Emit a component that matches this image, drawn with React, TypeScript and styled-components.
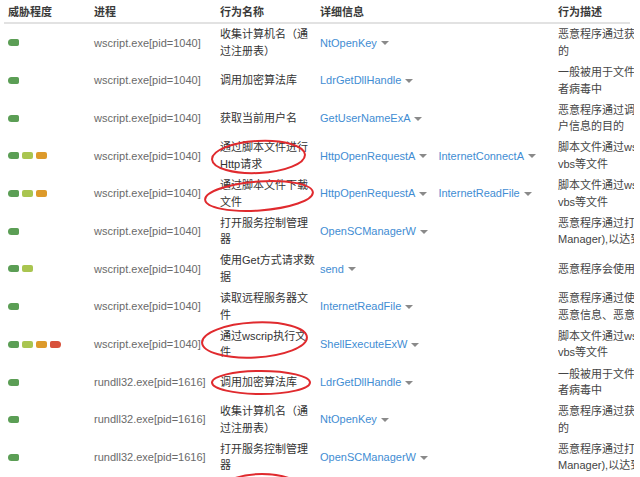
import React from 'react';
import styled, { createGlobalStyle } from 'styled-components';

type Level = 'green' | 'lime' | 'orange' | 'red';

interface BehaviorRow {
  levels: Level[];
  process: string;
  name: string;
  apis: string[];
  desc: string;
}

const LEVEL_COLORS: Record<Level, string> = {
  green: '#5b9e55',
  lime: '#a9c550',
  orange: '#dd9a2a',
  red: '#d8513c',
};

const WS = 'wscript.exe[pid=1040]';
const RD = 'rundll32.exe[pid=1616]';

const DESC_NAME = '恶意程序通过获取计算机名称达到收集主机信息的目\n的';
const DESC_CRYPT = '一般被用于文件加密或者加密通信，常见于勒索软件或\n者病毒中';
const DESC_SCM = '恶意程序通过打开服务控制管理器(Service Control\nManager),以达到创建或修改服务的目的';
const DESC_SCRIPT = '脚本文件通过wscript执行网络操作，常见于js、\nvbs等文件';

const rows: BehaviorRow[] = [
  { levels: ['green'], process: WS, name: '收集计算机名（通过注册表）', apis: ['NtOpenKey'], desc: DESC_NAME },
  { levels: ['green'], process: WS, name: '调用加密算法库', apis: ['LdrGetDllHandle'], desc: DESC_CRYPT },
  { levels: ['green'], process: WS, name: '获取当前用户名', apis: ['GetUserNameExA'], desc: '恶意程序通过调用该函数获取当前用户名，达到获取用\n户信息的目的' },
  { levels: ['green', 'lime', 'orange'], process: WS, name: '通过脚本文件进行Http请求', apis: ['HttpOpenRequestA', 'InternetConnectA'], desc: DESC_SCRIPT },
  { levels: ['green', 'lime', 'orange'], process: WS, name: '通过脚本文件下载文件', apis: ['HttpOpenRequestA', 'InternetReadFile'], desc: DESC_SCRIPT },
  { levels: ['green'], process: WS, name: '打开服务控制管理器', apis: ['OpenSCManagerW'], desc: DESC_SCM },
  { levels: ['green', 'lime'], process: WS, name: '使用Get方式请求数据', apis: ['send'], desc: '恶意程序会使用send函数向远程服务器发送数据' },
  { levels: ['green'], process: WS, name: '读取远程服务器文件', apis: ['InternetReadFile'], desc: '恶意程序通过使用该函数读取远程服务器上的文件，获取\n恶意信息、恶意代码等' },
  { levels: ['green', 'lime', 'orange', 'red'], process: WS, name: '通过wscrip执行文件', apis: ['ShellExecuteExW'], desc: DESC_SCRIPT },
  { levels: ['green'], process: RD, name: '调用加密算法库', apis: ['LdrGetDllHandle'], desc: DESC_CRYPT },
  { levels: ['green'], process: RD, name: '收集计算机名（通过注册表）', apis: ['NtOpenKey'], desc: DESC_NAME },
  { levels: ['green'], process: RD, name: '打开服务控制管理器', apis: ['OpenSCManagerW'], desc: DESC_SCM },
];

// hand-drawn red marks over the name column
const marks = [
  { cx: 258.5, cy: 157, rx: 46.5, ry: 16, rot: -3 },
  { cx: 259, cy: 196, rx: 54, ry: 14.5, rot: -4 },
  { cx: 254.5, cy: 340, rx: 52.5, ry: 17.5, rot: -3 },
  { cx: 261, cy: 382.5, rx: 49, ry: 11.5, rot: 0 },
  { cx: 262, cy: 498, rx: 48, ry: 24, rot: 0 },
];

export default function App() {
  return (
    <>
      <GlobalStyle />
      <Page>
        <Table>
          <HeaderRow>
            <HeadCell>威胁程度</HeadCell>
            <HeadCell>进程</HeadCell>
            <HeadCell>行为名称</HeadCell>
            <HeadCell>详细信息</HeadCell>
            <HeadCell>行为描述</HeadCell>
          </HeaderRow>

          {rows.map((row, i) => (
            <Row key={i}>
              <LevelCell>
                {row.levels.map((lv, j) => (
                  <LevelBar key={j} $level={lv} />
                ))}
              </LevelCell>
              <ProcessCell>{row.process}</ProcessCell>
              <NameCell>{row.name}</NameCell>
              <DetailCell>
                {row.apis.map((api) => (
                  <ApiLink key={api}>
                    {api}
                    <Caret />
                  </ApiLink>
                ))}
              </DetailCell>
              <DescCell>{row.desc}</DescCell>
            </Row>
          ))}
        </Table>

        <Marks viewBox="0 0 640 477" width="640" height="477">
          {marks.map((m, i) => (
            <ellipse
              key={i}
              cx={m.cx}
              cy={m.cy}
              rx={m.rx}
              ry={m.ry}
              transform={`rotate(${m.rot} ${m.cx} ${m.cy})`}
              fill="none"
              stroke="#e02a2e"
              strokeWidth="2"
            />
          ))}
        </Marks>
      </Page>
    </>
  );
}

const GlobalStyle = createGlobalStyle`
  html, body {
    margin: 0;
    padding: 0;
    background: #fff;
    overflow: hidden;
  }
  body {
    font-family: "Liberation Sans", Arial, "Noto Sans CJK SC", sans-serif;
    font-size: 11px;
    color: #333;
  }
`;

const Page = styled.div`
  position: relative;
  width: 640px;
  height: 477px;
  overflow: hidden;
`;

const Table = styled.div`
  margin-left: 4px;
  width: 626px;
`;

/* the description column is cut off at the panel edge, as in the source view */
const columns = '90px 126px 100px 238px 76px';

const HeaderRow = styled.div`
  display: grid;
  grid-template-columns: ${columns};
  height: 22px;
  align-items: center;
  border-bottom: 2px solid #e2e2e2;
`;

const HeadCell = styled.div`
  font-weight: bold;
  color: #3a3a3a;
  white-space: nowrap;

  &:first-child {
    padding-left: 4px;
  }
`;

const Row = styled.div`
  display: grid;
  grid-template-columns: ${columns};
  height: 37.7px;
  align-items: center;
  line-height: 16.5px;
`;

const LevelCell = styled.div`
  display: flex;
  gap: 3px;
  padding-left: 4px;
`;

const LevelBar = styled.span<{ $level: Level }>`
  display: block;
  width: 11px;
  height: 7px;
  border-radius: 2px;
  background: ${(p) => LEVEL_COLORS[p.$level]};

  &:first-child {
    border-radius: 4px 2px 2px 4px;
  }
  &:nth-child(4) {
    border-radius: 2px 4px 4px 2px;
  }
`;

const ProcessCell = styled.div`
  color: #6a6a6a;
  white-space: nowrap;
`;

const NameCell = styled.div`
  color: #333;
  padding-right: 4px;
`;

const DetailCell = styled.div`
  display: flex;
  align-items: center;
  gap: 11px;
`;

const ApiLink = styled.span`
  display: inline-flex;
  align-items: center;
  gap: 4px;
  color: #3f8dd3;
  white-space: nowrap;
`;

const Caret = styled.span`
  display: inline-block;
  width: 0;
  height: 0;
  margin-top: 1px;
  border-left: 4px solid transparent;
  border-right: 4px solid transparent;
  border-top: 4px solid #8a8a8a;
`;

const DescCell = styled.div`
  color: #444;
  white-space: pre;
  overflow: hidden;
`;

const Marks = styled.svg`
  position: absolute;
  left: 0;
  top: 0;
  pointer-events: none;
`;
